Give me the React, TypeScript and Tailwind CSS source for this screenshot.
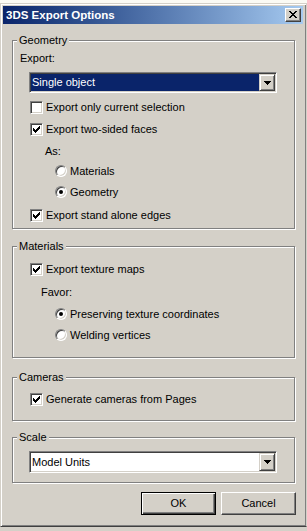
import React from 'react';

const CheckGlyph: React.FC = () => (
    <svg width="7" height="7" viewBox="0 0 7 7" shapeRendering="crispEdges" className="absolute left-[2px] top-[2px]">
        <rect x="6" y="0" width="1" height="1" fill="#000" />
        <rect x="5" y="1" width="2" height="1" fill="#000" />
        <rect x="0" y="2" width="1" height="1" fill="#000" />
        <rect x="4" y="2" width="3" height="1" fill="#000" />
        <rect x="0" y="3" width="2" height="1" fill="#000" />
        <rect x="3" y="3" width="3" height="1" fill="#000" />
        <rect x="0" y="4" width="5" height="1" fill="#000" />
        <rect x="1" y="5" width="3" height="1" fill="#000" />
        <rect x="2" y="6" width="1" height="1" fill="#000" />
    </svg>
);

const Checkbox: React.FC<{ label: string; checked?: boolean; className?: string }> = ({ label, checked, className = '' }) => (
    <div className={`flex items-center h-[20px] gap-[3px] ${className}`}>
        <div className="relative w-[13px] h-[13px] shrink-0 bg-white border border-t-[#808080] border-l-[#808080] border-r-white border-b-white shadow-[inset_1px_1px_0_#404040,inset_-1px_-1px_0_#d4d0c8]">
            {checked && <CheckGlyph />}
        </div>
        <span className="leading-[13px]">{label}</span>
    </div>
);

const Radio: React.FC<{ label: string; checked?: boolean; className?: string }> = ({ label, checked, className = '' }) => (
    <div className={`flex items-center h-[20px] gap-[3px] ${className}`}>
        <div className="w-[12px] h-[12px] shrink-0 rounded-full bg-white border border-t-[#808080] border-l-[#808080] border-r-white border-b-white shadow-[inset_1px_1px_0_#404040,inset_-1px_-1px_0_#d4d0c8] flex items-center justify-center">
            {checked && <div className="w-[4px] h-[4px] rounded-full bg-black" />}
        </div>
        <span className="leading-[13px]">{label}</span>
    </div>
);

const Combo: React.FC<{ value: string; focused?: boolean; className?: string }> = ({ value, focused, className = '' }) => (
    <div className={`flex w-[248px] p-[1px] bg-white border border-t-[#808080] border-l-[#808080] border-r-white border-b-white shadow-[inset_1px_1px_0_#404040,inset_-1px_-1px_0_#d4d0c8] ${className}`}>
        <div className={`flex-1 flex items-center pl-[1px] ${focused ? 'bg-[#0a246a] text-white' : 'text-black'}`}>{value}</div>
        <div className="w-[16px] h-full shrink-0 bg-[#d4d0c8] border border-t-[#d4d0c8] border-l-[#d4d0c8] border-r-[#404040] border-b-[#404040] shadow-[inset_1px_1px_0_#fff,inset_-1px_-1px_0_#808080] flex items-center justify-center">
            <svg width="7" height="4" viewBox="0 0 7 4" shapeRendering="crispEdges">
                <rect x="0" y="0" width="7" height="1" fill="#000" />
                <rect x="1" y="1" width="5" height="1" fill="#000" />
                <rect x="2" y="2" width="3" height="1" fill="#000" />
                <rect x="3" y="3" width="1" height="1" fill="#000" />
            </svg>
        </div>
    </div>
);

const Group: React.FC<{ title: string; className?: string; children: React.ReactNode }> = ({ title, className = '', children }) => (
    <div className={`relative ml-[9px] w-[283px] border border-[#808080] shadow-[inset_1px_1px_0_#fff,1px_1px_0_#fff] flex flex-col ${className}`}>
        <span className="absolute top-[-7px] left-[4px] px-[2px] bg-[#d4d0c8] leading-[13px]">{title}</span>
        {children}
    </div>
);

export default function App() {
    return (
        <div className="w-[307px] h-[531px] bg-[#d4d0c8] overflow-hidden text-[11px] text-black font-['Liberation_Sans',Arial,sans-serif]">
            <div className="h-[3px] bg-[#fbfaf4]" />
            <div className="h-[524px] border border-t-[#d4d0c8] border-l-[#d4d0c8] border-r-[#d4d0c8] border-b-[#404040] shadow-[inset_1px_1px_0_#fff,inset_-1px_-1px_0_#808080] pt-[2px] pl-[2px] pr-[3px] flex flex-col">
                {/* title bar */}
                <div className="h-[18px] shrink-0 flex items-center justify-between bg-linear-to-r from-[#0a246a] to-[#a6caf0] pl-[3px] pr-[2px]">
                    <span className="text-white font-bold text-[11.5px] leading-[13px]">3DS Export Options</span>
                    <div className="w-[16px] h-[14px] bg-[#d4d0c8] border border-t-white border-l-white border-r-[#404040] border-b-[#404040] shadow-[inset_-1px_-1px_0_#808080] flex items-start pl-[3px] pt-[2px]">
                        <svg width="8" height="7" viewBox="0 0 8 7" shapeRendering="crispEdges">
                            <rect x="0" y="0" width="2" height="1" fill="#000" />
                            <rect x="6" y="0" width="2" height="1" fill="#000" />
                            <rect x="1" y="1" width="2" height="1" fill="#000" />
                            <rect x="5" y="1" width="2" height="1" fill="#000" />
                            <rect x="2" y="2" width="4" height="1" fill="#000" />
                            <rect x="3" y="3" width="2" height="1" fill="#000" />
                            <rect x="2" y="4" width="4" height="1" fill="#000" />
                            <rect x="1" y="5" width="2" height="1" fill="#000" />
                            <rect x="5" y="5" width="2" height="1" fill="#000" />
                            <rect x="0" y="6" width="2" height="1" fill="#000" />
                            <rect x="6" y="6" width="2" height="1" fill="#000" />
                        </svg>
                    </div>
                </div>

                <Group title="Geometry" className="mt-[16px] h-[189px]">
                    <span className="mt-[11px] ml-[7px] leading-[13px]">Export:</span>
                    <Combo value="Single object" focused className="mt-[7px] ml-[16px] h-[21px]" />
                    <Checkbox label="Export only current selection" className="mt-[4px] ml-[17px]" />
                    <Checkbox label="Export two-sided faces" checked className="mt-[2px] ml-[17px]" />
                    <div className="mt-[2px] ml-[32px] h-[20px] flex items-center">As:</div>
                    <Radio label="Materials" className="ml-[42px]" />
                    <Radio label="Geometry" checked className="mt-[1px] ml-[42px]" />
                    <Checkbox label="Export stand alone edges" checked className="mt-[3px] ml-[17px]" />
                </Group>

                <Group title="Materials" className="mt-[17px] h-[112px]">
                    <Checkbox label="Export texture maps" checked className="mt-[12px] ml-[17px]" />
                    <div className="mt-[3px] ml-[28px] h-[20px] flex items-center">Favor:</div>
                    <Radio label="Preserving texture coordinates" checked className="mt-[2px] ml-[42px]" />
                    <Radio label="Welding vertices" className="mt-[1px] ml-[42px]" />
                </Group>

                <Group title="Cameras" className="mt-[19px] h-[44px]">
                    <Checkbox label="Generate cameras from Pages" checked className="mt-[11px] ml-[17px]" />
                </Group>

                <Group title="Scale" className="mt-[16px] h-[46px]">
                    <Combo value="Model Units" className="mt-[13px] ml-[16px] h-[22px]" />
                </Group>

                <div className="mt-[9px] mr-[7px] flex justify-end gap-[5px]">
                    <button className="w-[75px] h-[23px] bg-[#d4d0c8] border border-black shadow-[inset_1px_1px_0_#fff,inset_-1px_-1px_0_#404040,inset_-2px_-2px_0_#808080] leading-[13px]">OK</button>
                    <button className="w-[75px] h-[23px] bg-[#d4d0c8] border border-t-white border-l-white border-r-[#404040] border-b-[#404040] shadow-[inset_-1px_-1px_0_#808080] leading-[13px]">Cancel</button>
                </div>
            </div>
        </div>
    );
}
